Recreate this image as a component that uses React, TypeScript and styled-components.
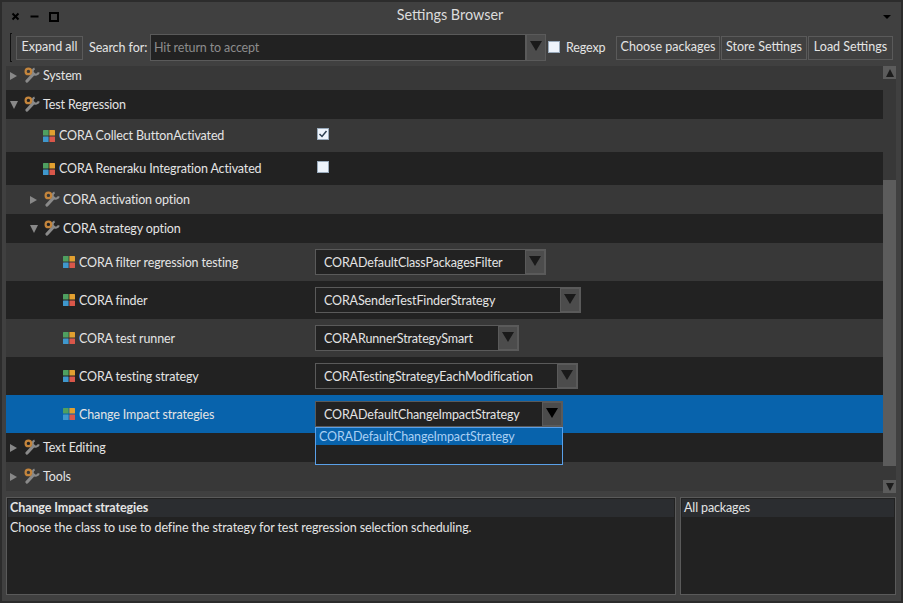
import React from 'react';
import styled, { createGlobalStyle } from 'styled-components';

const Global = createGlobalStyle`
  html, body { margin: 0; padding: 0; background: #404040; }
  body { font-family: "Lato", "Noto Sans", sans-serif; font-size: 12.5px; letter-spacing: -0.13px; color: #e4e4e4; }
  * { box-sizing: border-box; }
`;

const Window = styled.div`
  width: 903px; height: 603px; background: #404040;
  border: 2px solid #2c2c2c; border-left-width: 2px;
  display: flex; flex-direction: column; overflow: hidden;
`;
const TitleBar = styled.div`
  height: 31px; flex: none; display: flex; align-items: center; padding: 0 10px 2px 9px; position: relative;
`;
const WinButtons = styled.div`display: flex; align-items: center; gap: 10px;`;
const Title = styled.div`
  position: absolute; left: 0; right: 3px; top: 4px; text-align: center; font-size: 14.4px; letter-spacing: 0; color: #dcdcdc; line-height: 18px;
`;
const MenuCaret = styled.div`
  margin-left: auto; width: 0; height: 0; border-left: 4px solid transparent; border-right: 4px solid transparent; border-top: 4px solid #000;
`;
const Toolbar = styled.div`
  height: 33px; flex: none; display: flex; align-items: center; padding: 0 8px 4px 8px;
`;
const Grip = styled.div`
  width: 2px; height: 29px; border-left: 1px solid #111; border-top: 1px solid #111; border-bottom: 1px solid #111; margin-right: 4px;
`;
const ToolButton = styled.div<{ $w: number; $ml?: number }>`
  width: ${p => p.$w}px; margin-left: ${p => p.$ml ?? 0}px; height: 24px; border: 1px solid #5a5a5a; background: #404040;
  display: flex; align-items: center; justify-content: center; white-space: nowrap; padding-bottom: 2px; letter-spacing: 0;
`;
const SearchLabel = styled.span`margin-left: 6px; margin-right: 2px; width: 59px; white-space: nowrap; letter-spacing: -0.06px;`;
const SearchBox = styled.div`
  width: 376px; height: 27px; background: #222; border: 1px solid #5a5a5a; color: #8c8c8c; padding: 0 3px;
  display: flex; align-items: center; white-space: nowrap;
`;
const ArrowBox = styled.div<{ $w?: number; $h?: number; $fg?: string }>`
  width: ${p => p.$w ?? 20}px; height: ${p => p.$h ?? 27}px; flex: none; background: #4c4c4c; border: 1px solid #5a5a5a;
  display: flex; align-items: center; justify-content: center;
  &::after { content: ""; width: 0; height: 0; border-left: 6px solid transparent; border-right: 6px solid transparent; border-top: 10px solid ${p => p.$fg ?? '#1a1a1a'}; margin-bottom: 3px; }
`;
const RegexpBox = styled.div`
  width: 12px; height: 12px; margin-left: 2px; margin-right: 6px; background: #eef4fc; border: 1px solid #9ab;
  flex: none; margin-bottom: 2px;
`;
const RegexpLabel = styled.span`width: 50px; white-space: nowrap;`;
const Body = styled.div`
  height: 427px; flex: none; margin-top: 0; display: flex; padding: 0 5px 0 4px;
`;
const Tree = styled.div`width: 877px; height: 425px; display: flex; flex-direction: column; position: relative; background: #383838;`;
const Row = styled.div<{ $h: number; $bg: 'light' | 'dark' | 'sel'; $indent: number; $pb?: number }>`
  height: ${p => p.$h}px; flex: none; padding-left: ${p => p.$indent}px; padding-bottom: ${p => p.$pb ?? 0}px; display: flex; align-items: center; position: relative;
  background: ${p => (p.$bg === 'light' ? '#383838' : p.$bg === 'dark' ? '#222222' : '#0863ac')};
`;
const Twisty = styled.div<{ $open: boolean }>`
  width: 8px; height: 10px; margin-right: 6px; flex: none; display: flex; align-items: center; justify-content: flex-start;
  &::after { content: ""; width: 0; height: 0;
    ${p => p.$open
      ? 'border-left:4px solid transparent;border-right:4px solid transparent;border-top:8px solid #888;'
      : 'border-top:4px solid transparent;border-bottom:4px solid transparent;border-left:7px solid #888;'}
  }
`;
const RowLabel = styled.span<{ $w: number; $tall?: boolean }>`
  width: ${p => p.$w}px; flex: none; white-space: nowrap;
  padding-bottom: ${p => (p.$tall ? 0 : 1)}px; padding-top: ${p => (p.$tall ? 1 : 0)}px;
`;
const Gem = styled.svg`width: 12px; height: 12px; flex: none; margin-right: 4px;`;
const Wrench = styled.svg`width: 16px; height: 16px; flex: none; margin-right: 3px; margin-bottom: 1px;`;
const Check = styled.div`
  width: 12px; height: 12px; margin-left: 1px; background: #eef4fc; border: 1px solid #9ab; display: flex; align-items: center; justify-content: center; margin-bottom: 4px;
`;
const Combo = styled.div<{ $w: number }>`
  width: ${p => p.$w}px; height: 26px; display: flex; background: #222; border: 1px solid #5a5a5a; position: relative;
`;
const ComboText = styled.div`flex: 1; padding: 0 0 0 8px; display: flex; align-items: center; white-space: nowrap;`;
const DropList = styled.div`
  position: absolute; left: -1px; top: 25px; width: 248px; height: 38px; background: #222; border: 1px solid #5aa0e8; z-index: 2;
`;
const DropItem = styled.div`
  height: 17px; background: #0863ac; color: #a8d0f4; padding-left: 3px; line-height: 17px; white-space: nowrap;
`;
const Scrollbar = styled.div`
  width: 13px; height: 427px; flex: none; background: #383838; display: flex; flex-direction: column;
`;
const ScrollSpacer = styled.div<{ $h: number }>`height: ${p => p.$h}px; flex: none;`;
const ScrollThumb = styled.div<{ $h: number }>`height: ${p => p.$h}px; flex: none; background: #5c5c5c;`;
const ScrollBtn = styled.div<{ $up?: boolean }>`
  width: 13px; height: 13px; flex: none; background: #5c5c5c; display: flex; align-items: center; justify-content: center;
  &::after { content: ""; width: 0; height: 0; border-left: 4.5px solid transparent; border-right: 4.5px solid transparent;
    ${p => (p.$up ? 'border-bottom:8px solid #1c1c1c;' : 'border-top:8px solid #1c1c1c;')} }
`;
const Footer = styled.div`flex: 1; display: flex; gap: 4px; padding: 4px 5px 6px 4px;`;
const Panel = styled.div<{ $w: number }>`
  width: ${p => p.$w}px; height: 98px; background: #222; border: 1px solid #5a5a5a; padding: 1px 1px;
`;
const PanelHead = styled.div`
  height: 18px; background: #2b2d30; padding: 0 2px 1px 2px; line-height: 17px; white-space: nowrap;
`;
const PanelHeadBold = styled(PanelHead)`font-weight: 700; letter-spacing: -0.09px;`;
const PanelText = styled.div`padding: 2px 2px; line-height: 17px; white-space: nowrap; letter-spacing: -0.085px;`;

const GemIcon = () => (
  <Gem viewBox="0 0 12 12">
    <rect x="0" y="0" width="5.6" height="5.6" rx="0.5" fill="#4fa060" />
    <rect x="6.4" y="0" width="5.6" height="5.6" rx="0.5" fill="#e2a030" />
    <rect x="0" y="6.4" width="5.6" height="5.6" rx="0.5" fill="#3f97cc" />
    <rect x="6.4" y="6.4" width="5.6" height="5.6" rx="0.5" fill="#d9574a" />
  </Gem>
);
const WrenchIcon = () => (
  <Wrench viewBox="0 0 16 16">
    <path d="M3 14L9.5 7" fill="none" stroke="#8a8a8a" strokeWidth="3.2" strokeLinecap="round" />
    <path d="M10.6 1.4A3.2 3.2 0 1 0 14.8 5.4" fill="none" stroke="#8a8a8a" strokeWidth="2.2" />
    <circle cx="4.4" cy="4.4" r="2.8" fill="none" stroke="#c4853c" strokeWidth="2.2" />
  </Wrench>
);
const ComboBox = ({ w, text, children, fg }: { w: number; text: string; children?: React.ReactNode; fg?: string }) => (
  <Combo $w={w}>
    <ComboText>{text}</ComboText>
    <ArrowBox $w={20} $h={24} $fg={fg} />
    {children}
  </Combo>
);

export default function App() {
  return (
    <Window>
      <Global />
      <TitleBar>
        <WinButtons>
          <svg width="9" height="9" viewBox="0 0 9 9"><path d="M1.5 1.5l6 6M7.5 1.5l-6 6" stroke="#000" strokeWidth="2" /></svg>
          <svg width="9" height="9" viewBox="0 0 9 9"><path d="M0.5 4.5h8" stroke="#000" strokeWidth="2" /></svg>
          <svg width="10" height="10" viewBox="0 0 10 10"><rect x="1" y="1" width="8" height="8" fill="none" stroke="#000" strokeWidth="2" /></svg>
        </WinButtons>
        <Title>Settings Browser</Title>
        <MenuCaret />
      </TitleBar>
      <Toolbar>
        <Grip />
        <ToolButton $w={67}>Expand all</ToolButton>
        <SearchLabel>Search for:</SearchLabel>
        <SearchBox>Hit return to accept</SearchBox>
        <ArrowBox />
        <RegexpBox />
        <RegexpLabel>Regexp</RegexpLabel>
        <ToolButton $w={104}>Choose packages</ToolButton>
        <ToolButton $w={86} $ml={1}>Store Settings</ToolButton>
        <ToolButton $w={85} $ml={1}>Load Settings</ToolButton>
      </Toolbar>
      <Body>
        <Tree>
          <Row $h={24} $bg="light" $indent={4} $pb={5}><Twisty $open={false} /><WrenchIcon /><RowLabel $w={200}>System</RowLabel></Row>
          <Row $h={29} $bg="dark" $indent={4}><Twisty $open /><WrenchIcon /><RowLabel $w={200}>Test Regression</RowLabel></Row>
          <Row $h={33} $bg="light" $indent={37}><GemIcon /><RowLabel $w={257}>CORA Collect ButtonActivated</RowLabel><Check><svg width="10" height="10" viewBox="0 0 10 10"><path d="M1.5 5l2.5 2.5L8.5 2" fill="none" stroke="#2c3e50" strokeWidth="1.5" /></svg></Check></Row>
          <Row $h={33} $bg="dark" $indent={37}><GemIcon /><RowLabel $w={257}>CORA Reneraku Integration Activated</RowLabel><Check /></Row>
          <Row $h={29} $bg="light" $indent={24}><Twisty $open={false} /><WrenchIcon /><RowLabel $w={200}>CORA activation option</RowLabel></Row>
          <Row $h={29} $bg="dark" $indent={24}><Twisty $open /><WrenchIcon /><RowLabel $w={200}>CORA strategy option</RowLabel></Row>
          <Row $h={38} $bg="light" $indent={57}><GemIcon /><RowLabel $w={236} $tall>CORA filter regression testing</RowLabel><ComboBox w={231} text="CORADefaultClassPackagesFilter" /></Row>
          <Row $h={38} $bg="dark" $indent={57}><GemIcon /><RowLabel $w={236} $tall>CORA finder</RowLabel><ComboBox w={266} text="CORASenderTestFinderStrategy" /></Row>
          <Row $h={38} $bg="light" $indent={57}><GemIcon /><RowLabel $w={236} $tall>CORA test runner</RowLabel><ComboBox w={204} text="CORARunnerStrategySmart" /></Row>
          <Row $h={38} $bg="dark" $indent={57}><GemIcon /><RowLabel $w={236} $tall>CORA testing strategy</RowLabel><ComboBox w={263} text="CORATestingStrategyEachModification" /></Row>
          <Row $h={38} $bg="sel" $indent={57}>
            <GemIcon /><RowLabel $w={236} $tall>Change Impact strategies</RowLabel>
            <ComboBox w={248} text="CORADefaultChangeImpactStrategy" fg="#000">
              <DropList><DropItem>CORADefaultChangeImpactStrategy</DropItem></DropList>
            </ComboBox>
          </Row>
          <Row $h={29} $bg="dark" $indent={4}><Twisty $open={false} /><WrenchIcon /><RowLabel $w={200}>Text Editing</RowLabel></Row>
          <Row $h={29} $bg="light" $indent={4}><Twisty $open={false} /><WrenchIcon /><RowLabel $w={200}>Tools</RowLabel></Row>
        </Tree>
        <Scrollbar>
          <ScrollBtn $up />
          <ScrollSpacer $h={101} />
          <ScrollThumb $h={286} />
          <ScrollSpacer $h={14} />
          <ScrollBtn />
        </Scrollbar>
      </Body>
      <Footer>
        <Panel $w={670}>
          <PanelHeadBold>Change Impact strategies</PanelHeadBold>
          <PanelText>Choose the class to use to define the strategy for test regression selection scheduling.</PanelText>
        </Panel>
        <Panel $w={216}>
          <PanelHead>All packages</PanelHead>
        </Panel>
      </Footer>
    </Window>
  );
}
